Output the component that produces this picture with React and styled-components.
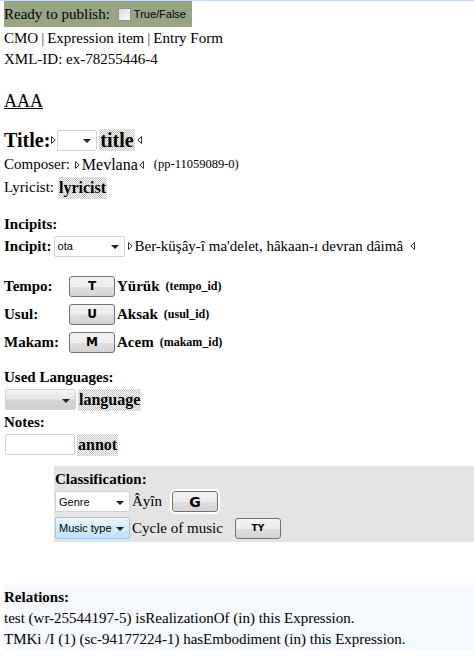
import React from "react";
import styled, { createGlobalStyle } from "styled-components";

const GlobalStyle = createGlobalStyle`
  html, body {
    margin: 0;
    padding: 0;
    background: #fff;
  }
  body {
    border-top: 1px solid #c9dcf2;
    font-family: "Liberation Serif", "Times New Roman", serif;
    font-size: 15px;
    color: #000;
  }
`;

const Page = styled.div`
  padding: 0 0 0 4px;
`;

const PublishBar = styled.div`
  display: inline-flex;
  align-items: center;
  gap: 6px;
  height: 26px;
  padding: 0 6px 0 0;
  background: #98a584;
  white-space: nowrap;
`;

const Check = styled.span`
  display: inline-block;
  width: 11px;
  height: 11px;
  border: 1px solid #8f8f8f;
  background: linear-gradient(135deg, #dcdcdc, #fafafa);
  margin-left: 2px;
`;

const SmallSans = styled.span`
  font-family: "Liberation Sans", Arial, sans-serif;
  font-size: 11px;
  margin-left: -3px;
`;

const Line = styled.div`
  line-height: 21px;
  height: 21px;
  display: flex;
  align-items: center;
  white-space: nowrap;
  margin-top: ${(p) => p.$mt || 0}px;
`;

const Pipe = styled.span`
  color: #333a80;
  padding: 0 3px;
`;

const Heading = styled.div`
  font-size: 18px;
  text-decoration: underline;
  margin-top: 19px;
  line-height: 24px;
`;

const Row = styled.div`
  display: flex;
  align-items: center;
  white-space: nowrap;
  height: ${(p) => p.$h || 23}px;
  margin-top: ${(p) => p.$mt || 0}px;
`;

const BigLabel = styled.span`
  font-weight: bold;
  font-size: 20px;
`;

const Label = styled.span`
  font-weight: bold;
  font-size: 15px;
  width: ${(p) => (p.$w ? p.$w + "px" : "auto")};
  display: inline-block;
`;

const Plain = styled.span`
  font-size: ${(p) => p.$size || 15}px;
  margin-left: ${(p) => p.$ml || 0}px;
`;

const TriBox = styled.svg`
  flex: none;
  margin: 0 ${(p) => p.$mr || 1}px 0 ${(p) => p.$ml || 1}px;
`;

const Tri = ({ left, ml, mr }) => (
  <TriBox width="5" height="8" viewBox="0 0 5 8" $ml={ml} $mr={mr}>
    {left ? (
      <path d="M4.5 0.5 L0.8 4 L4.5 7.5 Z" fill="#fff" stroke="#333" strokeWidth="1" />
    ) : (
      <path d="M0.5 0.5 L4.2 4 L0.5 7.5 Z" fill="#fff" stroke="#333" strokeWidth="1" />
    )}
  </TriBox>
);

const Hatched = styled.span`
  font-weight: bold;
  font-size: ${(p) => p.$size || 18}px;
  padding: 0 1px;
  line-height: 22px;
  background: repeating-conic-gradient(#c4c4c4 0 25%, #ffffff 0 50%) 0 0 / 2px 2px;
  margin-left: ${(p) => p.$ml || 2}px;
`;

const Select = styled.span`
  display: inline-flex;
  align-items: center;
  justify-content: space-between;
  box-sizing: border-box;
  flex: none;
  width: ${(p) => p.$w}px;
  height: ${(p) => p.$h || 21}px;
  border: 1px solid ${(p) => (p.$blue ? "#9fc6e4" : "#d2d2d2")};
  border-radius: 2px;
  background: ${(p) =>
    p.$blue
      ? "linear-gradient(#e8f5fd, #bfe2f8)"
      : p.$grey
      ? "linear-gradient(#f4f4f4 0%, #e7e7e7 45%, #d5d5d5 55%, #cfcfcf 100%)"
      : "#fff"};
  font-family: "Liberation Sans", Arial, sans-serif;
  font-size: 11px;
  padding: 0 5px 0 3px;
  margin-left: ${(p) => p.$ml || 0}px;
`;

const Caret = styled.span`
  width: 0;
  height: 0;
  border-left: 4px solid transparent;
  border-right: 4px solid transparent;
  border-top: 4px solid #222;
  margin-top: 2px;
`;

const Small = styled.span`
  font-size: ${(p) => p.$size || 12}px;
  font-weight: ${(p) => (p.$bold ? "bold" : "normal")};
  margin-left: ${(p) => p.$ml || 6}px;
`;

const Btn = styled.span`
  display: inline-flex;
  align-items: center;
  justify-content: center;
  box-sizing: border-box;
  flex: none;
  width: 46px;
  height: 21px;
  border: 1px solid #707070;
  border-radius: 3px;
  background: linear-gradient(#f4f4f4 0%, #ececec 50%, #e0e0e0 51%, #d3d3d3 100%);
  font-family: "DejaVu Sans", Verdana, sans-serif;
  font-weight: bold;
  font-size: ${(p) => p.$size || 12}px;
  margin-left: ${(p) => p.$ml || 0}px;
  margin-right: 2px;
  outline: ${(p) => (p.$ring ? "2px solid #fff" : "none")};
`;

const Classification = styled.div`
  margin: 10px 0 0 50px;
  background: #e4e4e4;
  padding: 3px 0 0 1px;
`;

const Relations = styled.div`
  margin-top: 43px;
  background: #f5f8fc;
  padding: 1px 0 0 0;
`;

export default function App() {
  return (
    <>
      <GlobalStyle />
      <Page>
        <PublishBar>
          <Plain>Ready to publish:</Plain>
          <Check />
          <SmallSans>True/False</SmallSans>
        </PublishBar>

        <Line $mt={1}>
          CMO<Pipe>|</Pipe>Expression item<Pipe>|</Pipe>Entry Form
        </Line>
        <Line>XML-ID: ex-78255446-4</Line>

        <Heading>AAA</Heading>

        <Row $h={24} $mt={15}>
          <BigLabel>Title:</BigLabel>
          <Tri ml={1} mr={1} />
          <Select $w={40}>
            <span />
            <Caret />
          </Select>
          <Hatched $size={20}>title</Hatched>
          <Tri left ml={2} />
        </Row>
        <Row $mt={1}>
          <Plain>Composer:</Plain>
          <Tri ml={5} mr={2} />
          <Plain $size={16}>Mevlana</Plain>
          <Tri left ml={1} />
          <Small $ml={9} $size={12.5}>(pp-11059089-0)</Small>
        </Row>
        <Row>
          <Plain>Lyricist:</Plain>
          <Hatched $size={16} $ml={4}>lyricist</Hatched>
        </Row>

        <Row $h={22} $mt={14}>
          <Label>Incipits:</Label>
        </Row>
        <Row $h={22}>
          <Label>Incipit:</Label>
          <Select $w={71} $ml={2}>
            <span>ota</span>
            <Caret />
          </Select>
          <Tri ml={3} />
          <Plain $ml={1}>Ber-küşây-î ma'delet, hâkaan-ı devran dâimâ</Plain>
          <Tri left ml={7} />
        </Row>

        <Row $h={28} $mt={15}>
          <Label $w={65}>Tempo:</Label>
          <Btn>T</Btn>
          <Label>Yürük</Label>
          <Small $bold>(tempo_id)</Small>
        </Row>
        <Row $h={28}>
          <Label $w={65}>Usul:</Label>
          <Btn>U</Btn>
          <Label>Aksak</Label>
          <Small $bold>(usul_id)</Small>
        </Row>
        <Row $h={28}>
          <Label $w={65}>Makam:</Label>
          <Btn>M</Btn>
          <Label>Acem</Label>
          <Small $bold>(makam_id)</Small>
        </Row>

        <Row $h={22} $mt={10}>
          <Label>Used Languages:</Label>
        </Row>
        <Row>
          <Select $w={71} $ml={1} $grey>
            <span />
            <Caret />
          </Select>
          <Hatched $size={16} $ml={2}>language</Hatched>
        </Row>
        <Row $h={22}>
          <Label>Notes:</Label>
        </Row>
        <Row>
          <Select $w={70} $ml={1} />
          <Hatched $size={16} $ml={2}>annot</Hatched>
        </Row>

        <Classification>
          <Row $h={20}>
            <Label>Classification:</Label>
          </Row>
          <Row $h={25}>
            <Select $w={75}>
              <span>Genre</span>
              <Caret />
            </Select>
            <Plain $ml={2}>Âyîn</Plain>
            <Btn $ml={10} $size={14} $ring>G</Btn>
          </Row>
          <Row $h={28}>
            <Select $w={75} $h={22} $blue>
              <span>Music type</span>
              <Caret />
            </Select>
            <Plain $ml={2}>Cycle of music</Plain>
            <Btn $ml={12} $size={9}>TY</Btn>
          </Row>
        </Classification>

        <Relations>
          <Line $mt={1}>
            <Label>Relations:</Label>
          </Line>
          <Line>test (wr-25544197-5) isRealizationOf (in) this Expression.</Line>
          <Line>TMKi /I (1) (sc-94177224-1) hasEmbodiment (in) this Expression.</Line>
        </Relations>
      </Page>
    </>
  );
}
